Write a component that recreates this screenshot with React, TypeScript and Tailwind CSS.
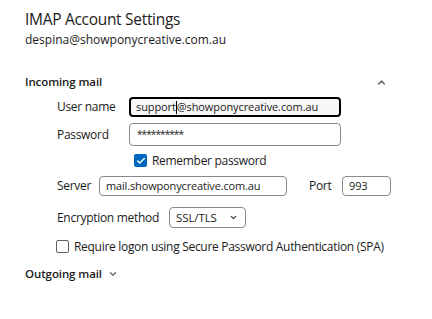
import { Check, ChevronDown, ChevronUp } from "lucide-react";

const font = { fontFamily: '"Segoe UI", "Open Sans", "Noto Sans", sans-serif' };

export default function App() {
  return (
    <div className="w-[432px] h-[319px] bg-white text-[#1b1b1b] overflow-hidden" style={font}>
      {/* Header */}
      <div className="pl-[25px] pt-[8px]">
        <h1 className="text-[15.5px] leading-[22px] tracking-[-0.3px]">IMAP Account Settings</h1>
        <p className="text-[12px] leading-[18px] mt-[1px]">despina@showponycreative.com.au</p>
      </div>

      {/* Incoming mail */}
      <div className="mt-[23px] pl-[25px] pr-[45px] flex items-center justify-between h-[20px]">
        <span className="text-[11.5px] font-semibold tracking-[-0.1px]">Incoming mail</span>
        <ChevronUp className="w-[11px] h-[11px] text-[#707070]" strokeWidth={3.5} />
      </div>

      <div className="pl-[57px] mt-[5px] flex items-center h-[20px] text-[12px] tracking-[-0.3px]">
        <span className="w-[72px] shrink-0">User name</span>
        <div className="w-[212px] h-[20px] rounded-[4px] border-2 border-black bg-[#f7f7f7] flex items-center pl-[5px] text-[11px] tracking-[-0.1px]">
          support<span className="inline-block w-px h-[13px] bg-black"></span>@showponycreative.com.au
        </div>
      </div>

      <div className="pl-[57px] mt-[6px] flex items-center h-[23px] text-[12px] tracking-[-0.3px]">
        <span className="w-[72px] shrink-0">Password</span>
        <div className="w-[212px] h-[23px] rounded-[4px] border border-[#8a8a8a] bg-white flex items-center pl-[7px] text-[10px] tracking-[-0.9px]">
          **********
        </div>
      </div>

      <div className="pl-[134px] mt-[8px] flex items-center gap-[5px] h-[13px] text-[12px] tracking-[-0.3px]">
        <span className="w-[13px] h-[13px] rounded-[2px] bg-[#0067c0] flex items-center justify-center shrink-0">
          <Check className="w-[10px] h-[10px] text-white" strokeWidth={3.5} />
        </span>
        <span>Remember password</span>
      </div>

      <div className="pl-[57px] mt-[9px] flex items-center h-[20px] text-[12px] tracking-[-0.3px]">
        <span className="w-[42px] shrink-0">Server</span>
        <div className="w-[188px] h-[20px] rounded-[4px] border border-[#8a8a8a] flex items-center pl-[6px] text-[11px] tracking-[-0.15px]">
          mail.showponycreative.com.au
        </div>
        <span className="ml-[22px] w-[33px] shrink-0">Port</span>
        <div className="w-[49px] h-[20px] rounded-[4px] border border-[#8a8a8a] flex items-center pl-[6px] text-[11px] tracking-[-0.15px]">
          993
        </div>
      </div>

      <div className="pl-[57px] mt-[11px] flex items-center h-[21px] text-[12px] tracking-[-0.3px]">
        <span className="w-[112px] shrink-0">Encryption method</span>
        <div className="w-[77px] h-[21px] rounded-[4px] border border-[#8a8a8a] flex items-center justify-between pl-[6px] pr-[7px] text-[11.5px] tracking-[-0.1px]">
          SSL/TLS
          <ChevronDown className="w-[9px] h-[9px] text-[#333]" strokeWidth={3} />
        </div>
      </div>

      <div className="pl-[56px] mt-[12px] flex items-center gap-[5px] h-[13px] text-[12px] tracking-[-0.3px]">
        <span className="w-[13px] h-[13px] rounded-[2px] border border-[#5f5f5f] bg-white shrink-0"></span>
        <span>Require logon using Secure Password Authentication (SPA)</span>
      </div>

      <div className="pl-[25px] mt-[11px] flex items-center gap-[6px] h-[20px]">
        <span className="text-[11.5px] font-semibold tracking-[-0.1px]">Outgoing mail</span>
        <ChevronDown className="w-[10px] h-[10px] text-[#707070]" strokeWidth={3.5} />
      </div>
    </div>
  );
}
